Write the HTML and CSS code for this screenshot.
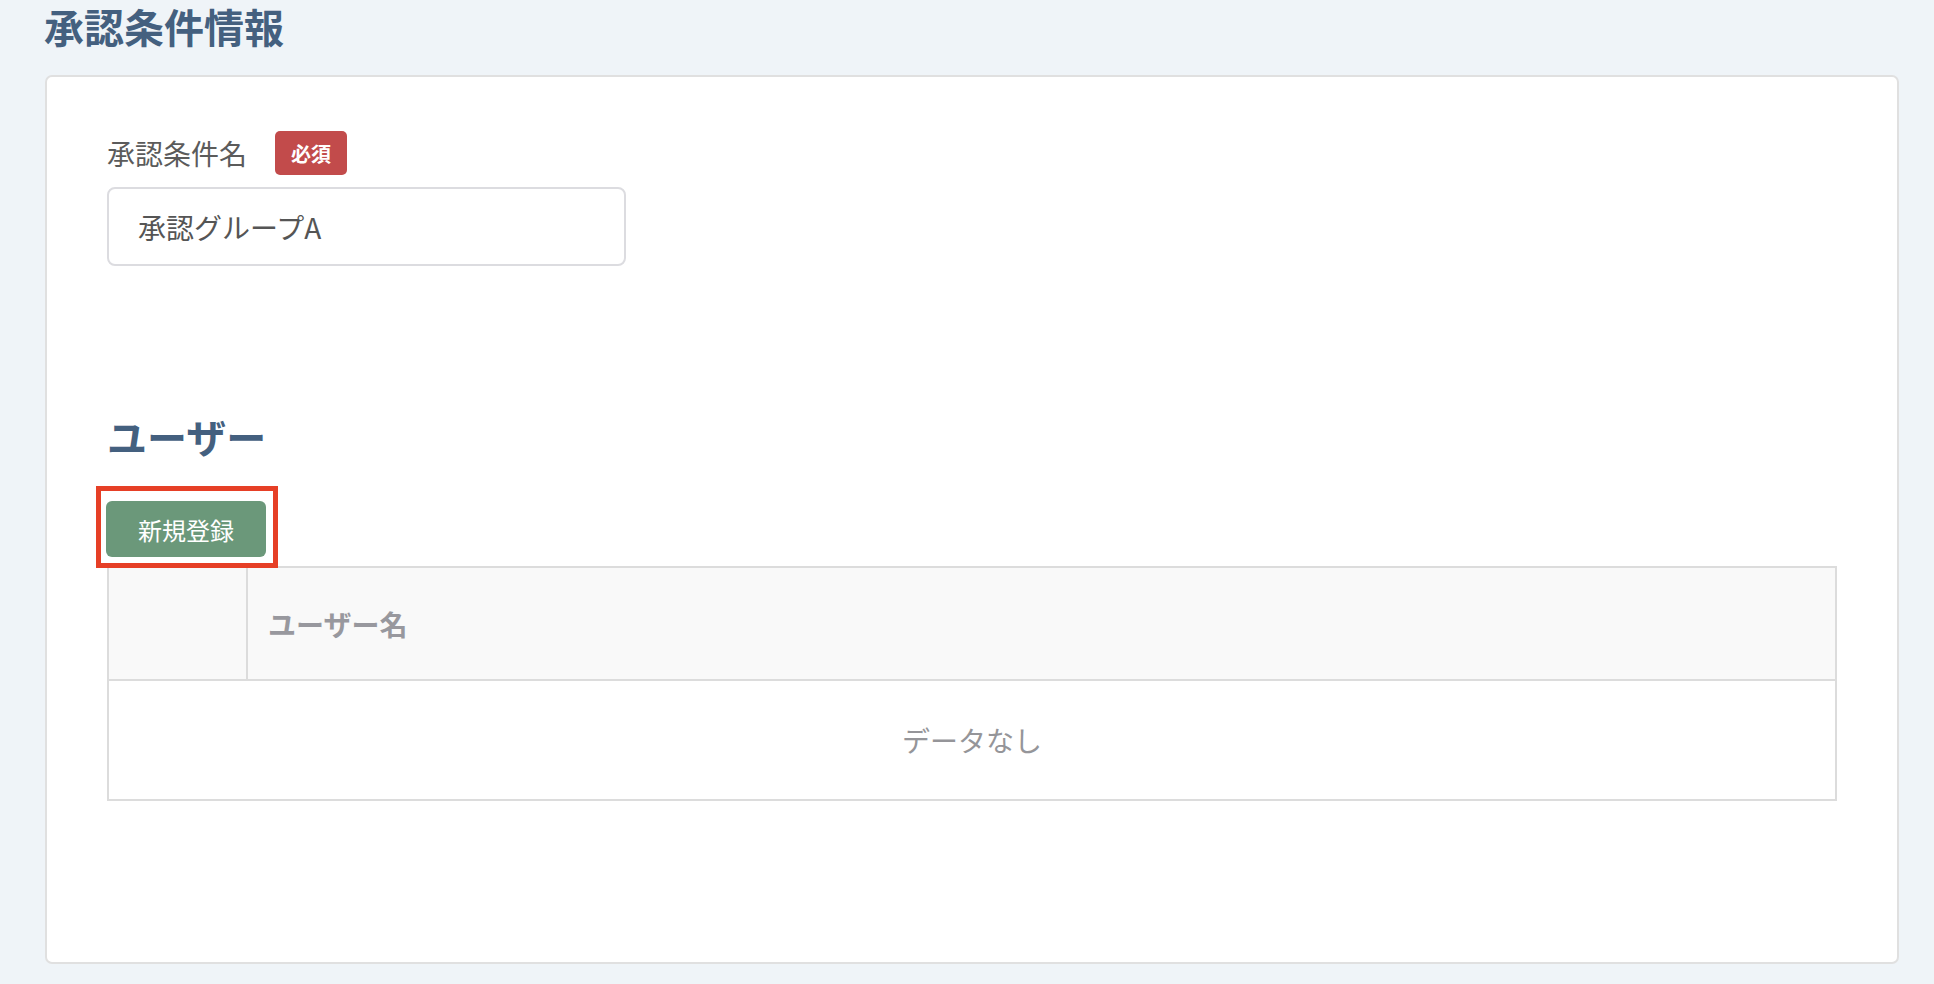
FILE: index.html
```html
<!DOCTYPE html>
<html lang="ja">
  <head>
    <meta charset="UTF-8" />
    <meta name="viewport" content="width=device-width, initial-scale=1.0" />
    <title>承認条件情報</title>
    <link rel="stylesheet" href="styles.css">
  </head>
  <body>
    <h1 class="page-title">承認条件情報</h1>

    <div class="card">
      <!-- 承認条件名 -->
      <div class="field-label">
        <span>承認条件名</span>
        <span class="badge">必須</span>
      </div>
      <div class="text-input">承認グループA</div>

      <h2 class="section-title">ユーザー</h2>

      <div class="actions">
        <span class="highlight">
          <button class="btn-create">新規登録</button>
        </span>
      </div>

      <table class="user-table">
        <thead>
          <tr>
            <th class="col-check"></th>
            <th>ユーザー名</th>
          </tr>
        </thead>
        <tbody>
          <tr>
            <td class="empty" colspan="2">データなし</td>
          </tr>
        </tbody>
      </table>
    </div>
  </body>
</html>
```

FILE: styles.css
```css
body {
  margin: 0;
  padding: 2px 35px 22px 44px;
  background-color: #eff4f8;
  font-family: "Noto Sans CJK JP", "Noto Sans", sans-serif;
  color: #555;
}

.page-title {
  margin: 0 0 25px 0;
  font-size: 40px;
  line-height: 48px;
  font-weight: 700;
  color: #44607f;
}

.card {
  margin-left: 1px;
  padding: 54px 60px 161px 60px;
  background-color: #fff;
  border: 2px solid #e0e0e0;
  border-radius: 7px;
}

.field-label {
  display: flex;
  align-items: center;
  gap: 28px;
  height: 44px;
  font-size: 28px;
  color: #5b5b5b;
}

.badge {
  display: flex;
  align-items: center;
  justify-content: center;
  width: 72px;
  height: 44px;
  font-size: 20px;
  font-weight: 700;
  color: #fff;
  background-color: #c24b4b;
  border-radius: 5px;
}

.text-input {
  box-sizing: border-box;
  width: 519px;
  height: 79px;
  margin-top: 12px;
  padding: 0 29px;
  display: flex;
  align-items: center;
  font-size: 28px;
  color: #555;
  border: 2px solid #dcdce0;
  border-radius: 8px;
}

.section-title {
  margin: 146px 0 0 0;
  font-size: 40px;
  line-height: 48px;
  font-weight: 700;
  color: #44607f;
}

.actions {
  margin: 41px 0 0 -1px;
  height: 56px;
}

.highlight {
  position: relative;
  display: inline-block;
}

/* 注目枠 */
.highlight::after {
  content: "";
  position: absolute;
  top: -15px;
  left: -10px;
  right: -12px;
  bottom: -11px;
  border: 5px solid #e63f26;
  z-index: 2;
}

.btn-create {
  width: 160px;
  height: 56px;
  padding: 0;
  font-family: inherit;
  font-size: 24px;
  color: #fff;
  background-color: #6b987a;
  border: none;
  border-radius: 6px;
  cursor: pointer;
}

.user-table {
  width: 100%;
  margin-top: 9px;
  border-collapse: collapse;
  border: 2px solid #dcdcdc;
}

.user-table th {
  height: 111px;
  padding: 0 20px;
  text-align: left;
  font-size: 28px;
  font-weight: 700;
  color: #98989e;
  background-color: #f9f9f9;
  border: 2px solid #dcdcdc;
}

.user-table th.col-check {
  width: 97px;
}

.user-table td.empty {
  height: 118px;
  padding: 0;
  text-align: center;
  font-size: 28px;
  color: #959599;
}
```
